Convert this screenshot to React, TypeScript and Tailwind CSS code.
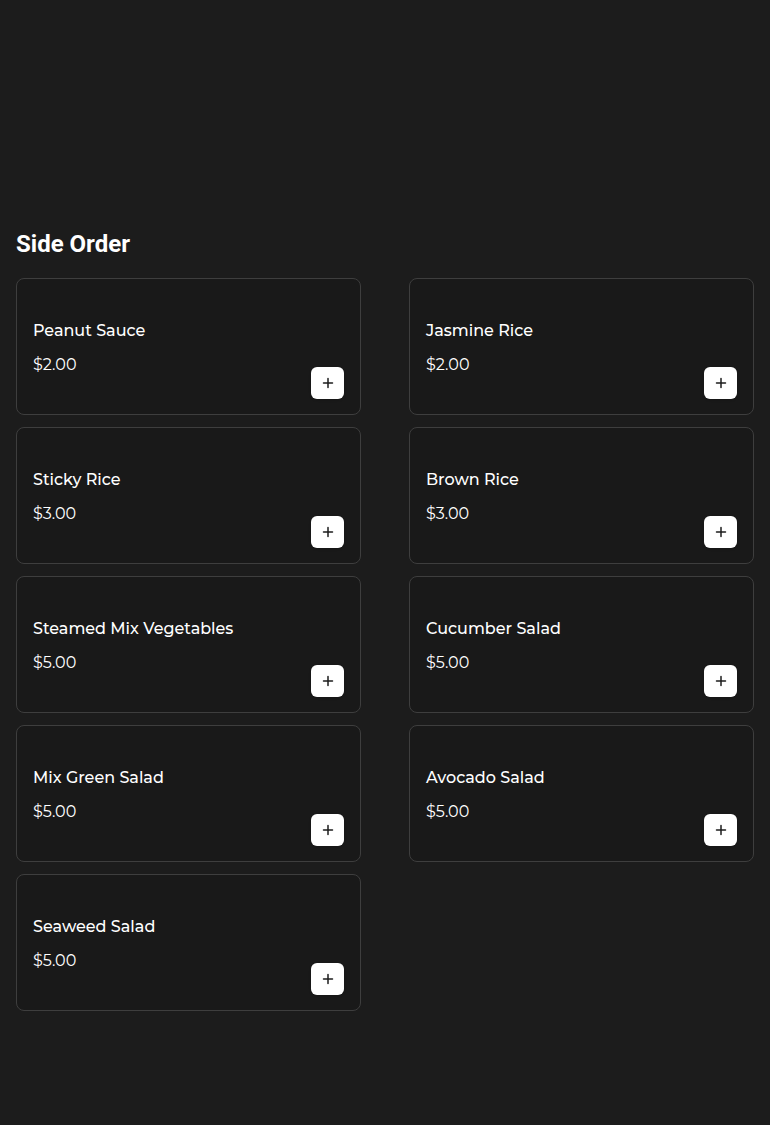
import React from 'react';

const items = [
  { name: 'Peanut Sauce', price: 2 },
  { name: 'Jasmine Rice', price: 2 },
  { name: 'Sticky Rice', price: 3 },
  { name: 'Brown Rice', price: 3 },
  { name: 'Steamed Mix Vegetables', price: 5 },
  { name: 'Cucumber Salad', price: 5 },
  { name: 'Mix Green Salad', price: 5 },
  { name: 'Avocado Salad', price: 5 },
  { name: 'Seaweed Salad', price: 5 },
];

function PlusIcon() {
  return (
    <svg width="12" height="12" viewBox="0 0 12 12" fill="none">
      <path d="M6 1.5v9M1.5 6h9" stroke="#1c1c1c" strokeWidth="1.5" strokeLinecap="round" />
    </svg>
  );
}

function ItemCard({ name, price }: { name: string; price: number }) {
  return (
    <div className="flex h-[137px] flex-col rounded-lg border border-[#3e3e3e] bg-[#191919] px-4 pt-[40px] pb-[15px]">
      <div className="text-base leading-6 font-medium text-white">{name}</div>
      <div className="mt-[10px] text-base leading-6 font-normal text-white">${price.toFixed(2)}</div>
      <div className="flex justify-end -mt-[10px]">
        <button className="flex h-8 w-[33px] items-center justify-center rounded-md bg-white shadow">
          <PlusIcon />
        </button>
      </div>
    </div>
  );
}

export default function App() {
  return (
    <div className="min-h-[1125px] bg-[#1c1c1c] px-4 pt-[228px]" style={{ fontFamily: 'Montserrat, "Open Sans", sans-serif' }}>
      <h2 className="mb-[18px] text-2xl leading-8 font-bold text-white" style={{ fontFamily: 'Roboto, sans-serif' }}>
        Side Order
      </h2>
      <div className="grid grid-cols-2 gap-x-12 gap-y-3">
        {items.map((it) => (
          <ItemCard key={it.name} name={it.name} price={it.price} />
        ))}
      </div>
    </div>
  );
}
